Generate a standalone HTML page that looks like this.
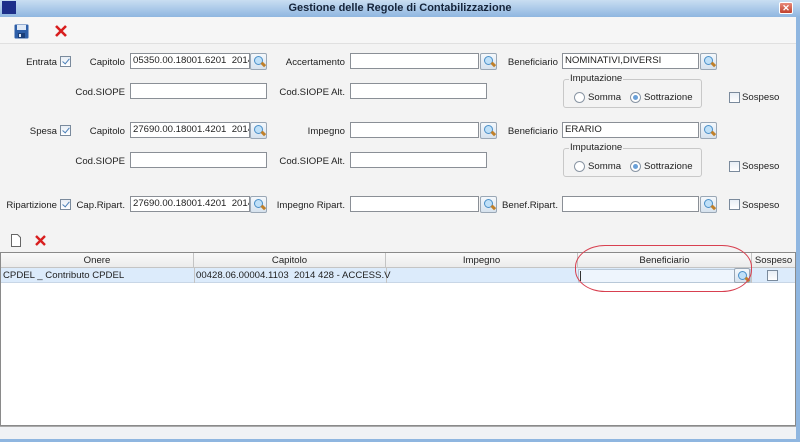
<!DOCTYPE html>
<html><head><meta charset="utf-8"><style>
*{margin:0;padding:0;box-sizing:border-box}
body{width:800px;height:442px;overflow:hidden;background:#f3f3f3;font-family:"Liberation Sans",sans-serif;font-size:10px;color:#222;position:relative}
.a{position:absolute}
.lbl{position:absolute;text-align:right;white-space:nowrap;line-height:14px;margin-top:2px;font-size:9.6px}
.inp{position:absolute;height:16px;background:#fff;border:1px solid #8a8f96;font-size:9.6px;line-height:14px;padding-left:2px;white-space:nowrap;overflow:hidden}
.mag{position:absolute;width:17px;height:17px;border:1px solid #9aa7b5;border-radius:2px;background:linear-gradient(#f4f8fc,#d6e2ee)}
.mag:before{content:"";position:absolute;left:3px;top:2px;width:7px;height:7px;border-radius:50%;border:1.5px solid #4a8fc8;background:#bfe0f8}
.mag:after{content:"";position:absolute;left:10px;top:9px;width:5px;height:2.5px;background:#c0802a;transform:rotate(45deg)}
.cb{position:absolute;width:11px;height:11px;border:1px solid #7a8a9c;background:linear-gradient(#e8eef5,#fff)}
.cb.on:after{content:"";position:absolute;left:3px;top:0px;width:3px;height:6px;border:solid #4a7fb8;border-width:0 1.5px 1.5px 0;transform:rotate(40deg)}
.grp{position:absolute;width:139px;height:29px;border:1px solid #c8c8c8;border-radius:3px}
.grp .t{position:absolute;left:5px;top:-7px;background:#f3f3f3;padding:0 1px;line-height:12px;font-size:9.6px}
.rad{position:absolute;width:11px;height:11px;border-radius:50%;border:1px solid #8a96a4;background:#fff}
.rad.on:after{content:"";position:absolute;left:2px;top:2px;width:5px;height:5px;border-radius:50%;background:#6aa0d8}
.th{position:absolute;top:0;height:15px;border-right:1px solid #c4c4c4;text-align:center;line-height:15px;font-size:9.6px}
</style></head><body>
<div class="a" style="left:0;top:0;width:800px;height:17px;background:linear-gradient(#c9def2,#8fb6e0);"></div>
<div class="a" style="left:2px;top:1px;width:14px;height:13px;background:#1d2f8a"></div>
<div class="a" style="left:0;top:1px;width:800px;text-align:center;font-weight:bold;font-size:11px;line-height:15px;color:#15243a">Gestione delle Regole di Contabilizzazione</div>
<div class="a" style="left:779px;top:2px;width:14px;height:12px;background:linear-gradient(#e88a7a,#c0402c);border:1px solid #fff;border-radius:2px;color:#fff;font-size:9px;font-weight:bold;text-align:center;line-height:10px">✕</div>
<div class="a" style="left:796px;top:17px;width:4px;height:425px;background:#8fb6e0"></div>
<div class="a" style="left:0;top:17px;width:796px;height:27px;background:#f6f6f6;border-bottom:1px solid #e0e0e0"></div>
<svg class="a" style="left:14px;top:24px" width="15" height="15" viewBox="0 0 15 15"><rect x="0.5" y="0.5" width="14" height="14" rx="1" fill="#2e5fa8"/><rect x="3" y="1" width="9" height="5" fill="#dfe9f6"/><rect x="4" y="9" width="7" height="5" fill="#1c3f78"/><rect x="5" y="10" width="2" height="3" fill="#dfe9f6"/></svg>
<svg class="a" style="left:54px;top:24px" width="14" height="14" viewBox="0 0 14 14"><path d="M2 2L12 12M12 2L2 12" stroke="#d81e1e" stroke-width="2.6"/></svg>
<!-- row 1 -->
<div class="lbl" style="right:743px;top:54px">Entrata</div><div class="cb on" style="left:60px;top:56px"></div>
<div class="lbl" style="right:675px;top:54px">Capitolo</div><div class="inp" style="left:130px;top:53px;width:120px">05350.00.18001.6201&nbsp; 2014</div><div class="mag" style="left:250px;top:53px"></div>
<div class="lbl" style="right:455px;top:54px">Accertamento</div><div class="inp" style="left:350px;top:53px;width:129px"></div><div class="mag" style="left:480px;top:53px"></div>
<div class="lbl" style="right:242px;top:54px">Beneficiario</div><div class="inp" style="left:562px;top:53px;width:137px">NOMINATIVI,DIVERSI</div><div class="mag" style="left:700px;top:53px"></div>
<!-- row 2 -->
<div class="lbl" style="right:675px;top:84px">Cod.SIOPE</div><div class="inp" style="left:130px;top:83px;width:137px"></div>
<div class="lbl" style="right:455px;top:84px">Cod.SIOPE Alt.</div><div class="inp" style="left:350px;top:83px;width:137px"></div>
<div class="grp" style="left:563px;top:79px"><span class="t">Imputazione</span></div>
<div class="rad" style="left:574px;top:92px"></div><div class="lbl" style="left:588px;top:89px">Somma</div>
<div class="rad on" style="left:630px;top:92px"></div><div class="lbl" style="left:644px;top:89px">Sottrazione</div>
<div class="cb" style="left:729px;top:92px"></div><div class="lbl" style="left:742px;top:89px">Sospeso</div>
<!-- row 3 -->
<div class="lbl" style="right:743px;top:123px">Spesa</div><div class="cb on" style="left:60px;top:125px"></div>
<div class="lbl" style="right:675px;top:123px">Capitolo</div><div class="inp" style="left:130px;top:122px;width:120px">27690.00.18001.4201&nbsp; 2014</div><div class="mag" style="left:250px;top:122px"></div>
<div class="lbl" style="right:455px;top:123px">Impegno</div><div class="inp" style="left:350px;top:122px;width:129px"></div><div class="mag" style="left:480px;top:122px"></div>
<div class="lbl" style="right:242px;top:123px">Beneficiario</div><div class="inp" style="left:562px;top:122px;width:137px">ERARIO</div><div class="mag" style="left:700px;top:122px"></div>
<!-- row 4 -->
<div class="lbl" style="right:675px;top:153px">Cod.SIOPE</div><div class="inp" style="left:130px;top:152px;width:137px"></div>
<div class="lbl" style="right:455px;top:153px">Cod.SIOPE Alt.</div><div class="inp" style="left:350px;top:152px;width:137px"></div>
<div class="grp" style="left:563px;top:148px"><span class="t">Imputazione</span></div>
<div class="rad" style="left:574px;top:161px"></div><div class="lbl" style="left:588px;top:158px">Somma</div>
<div class="rad on" style="left:630px;top:161px"></div><div class="lbl" style="left:644px;top:158px">Sottrazione</div>
<div class="cb" style="left:729px;top:161px"></div><div class="lbl" style="left:742px;top:158px">Sospeso</div>
<!-- row 5 -->
<div class="lbl" style="right:743px;top:197px">Ripartizione</div><div class="cb on" style="left:60px;top:199px"></div>
<div class="lbl" style="right:675px;top:197px">Cap.Ripart.</div><div class="inp" style="left:130px;top:196px;width:120px">27690.00.18001.4201&nbsp; 2014</div><div class="mag" style="left:250px;top:196px"></div>
<div class="lbl" style="right:455px;top:197px">Impegno Ripart.</div><div class="inp" style="left:350px;top:196px;width:129px"></div><div class="mag" style="left:480px;top:196px"></div>
<div class="lbl" style="right:242px;top:197px">Benef.Ripart.</div><div class="inp" style="left:562px;top:196px;width:137px"></div><div class="mag" style="left:700px;top:196px"></div>
<div class="cb" style="left:729px;top:199px"></div><div class="lbl" style="left:742px;top:197px">Sospeso</div>
<!-- toolbar 2 -->
<svg class="a" style="left:10px;top:234px" width="12" height="13" viewBox="0 0 12 13"><path d="M1.5 0.5H7.5L10.5 3.5V12.5H1.5Z" fill="#fff" stroke="#666"/></svg>
<svg class="a" style="left:34px;top:234px" width="13" height="13" viewBox="0 0 13 13"><path d="M2 2L11 11M11 2L2 11" stroke="#d81e1e" stroke-width="2.4"/></svg>
<!-- grid -->
<div class="a" style="left:0;top:252px;width:796px;height:174px;background:#fff;border:1px solid #8a8a8a"></div>
<div class="a" style="left:1px;top:253px;width:794px;height:15px;background:linear-gradient(#fafafa,#ececec);border-bottom:1px solid #c4c4c4">
<div class="th" style="left:0;width:193px">Onere</div>
<div class="th" style="left:193px;width:192px">Capitolo</div>
<div class="th" style="left:385px;width:192px">Impegno</div>
<div class="th" style="left:577px;width:174px">Beneficiario</div>
<div class="th" style="left:751px;width:43px;border-right:none">Sospeso</div>
</div>
<div class="a" style="left:1px;top:268px;width:794px;height:15px;background:#dcebfb;border-bottom:1px solid #c8d6e6"></div>
<div class="a" style="left:194px;top:268px;width:1px;height:15px;background:#c4c4c4"></div>
<div class="a" style="left:386px;top:268px;width:1px;height:15px;background:#c4c4c4"></div>
<div class="a" style="left:751px;top:268px;width:1px;height:15px;background:#c4c4c4"></div>
<div class="a" style="left:3px;top:269px;line-height:14px;font-size:9.6px">CPDEL _ Contributo CPDEL</div>
<div class="a" style="left:196px;top:269px;line-height:14px;font-size:9.6px">00428.06.00004.1103&nbsp; 2014 428 - ACCESS.V</div>
<div class="a" style="left:578px;top:269px;width:173px;height:14px;background:#eef5fd;border:1px solid #b8c8d8"></div>
<div class="a" style="left:580px;top:271px;width:1px;height:10px;background:#333"></div>
<div class="mag" style="left:734px;top:268px;width:16px;height:15px"></div>
<div class="cb" style="left:767px;top:270px"></div>
<div class="a" style="left:575px;top:245px;width:177px;height:47px;border:1px solid #d84050;border-radius:30px/22px"></div>
<div class="a" style="left:0;top:426px;width:796px;height:13px;background:#f0f2f5;border-top:1px solid #aaa"></div>
<div class="a" style="left:0;top:439px;width:800px;height:3px;background:#8fb6e0"></div>
</body></html>
